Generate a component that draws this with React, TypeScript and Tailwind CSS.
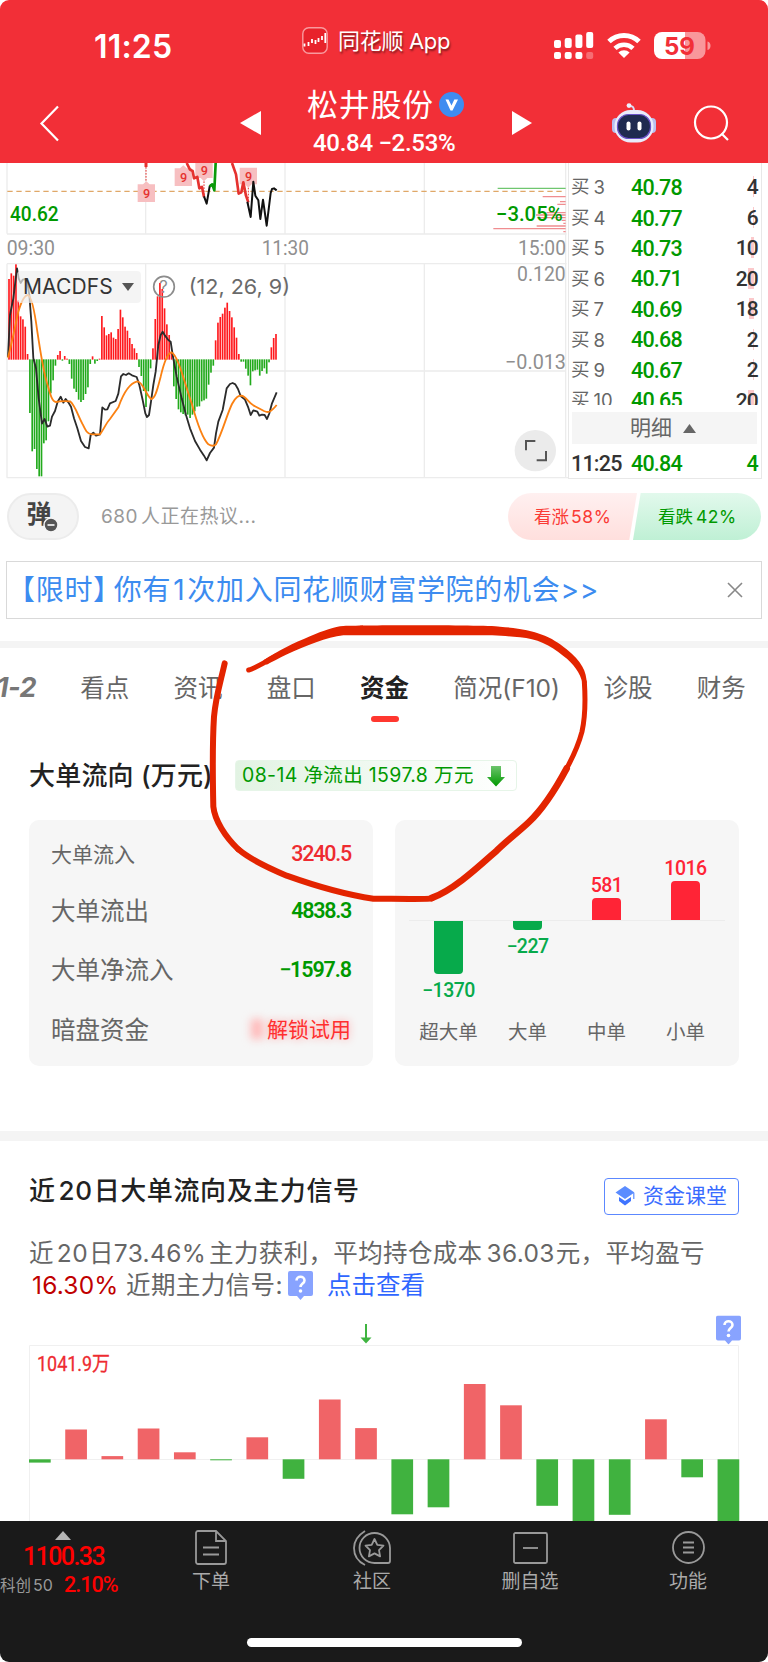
import clsx from 'clsx';

type Order = { level: string; price: string; volume: string; depth: number };
type Flow = { name: string; value: number; height: number };

// MACD histogram, one value per minute, in thirds of a pixel above the zero axis
const MACD = [
  242, 259, 252, 286, 178, 130, 121, 99, 17, -161, -276, -269, -329, -351, -351, -252, -243, -186, -102, -63,
  -19, 14, 26, -4, 11, 3, -14, -58, -88, -98, -121, -128, -122, -104, -84, -14, 10, -13, -5, 3,
  131, 97, 73, 77, 82, 66, 62, 92, 150, 127, 99, 87, 65, 47, 34, 20, -23, -50, -95, -143,
  -96, -27, 34, 122, 190, 230, 212, 154, 106, 74, 24, -81, -119, -150, -159, -164, -168, -166, -176, -166,
  -156, -142, -141, -126, -123, -118, -76, -40, -19, 58, 111, 128, 138, 156, 171, 146, 127, 97, 66, 17,
  -7, -7, -28, -49, -78, -36, -33, -31, -49, -35, -27, -43, -9, 37, 65, 77,
];

const DIF =
  '24,606 30,480 40,430 51,340 56,370 62,384 68,374 80,372 88,420 94,500 100,610 108,640 116,730 126,806 134,792 142,815 150,812 156,785 165,768 173,740 182,725 190,743 197,732 205,742 213,755 222,790 232,820 243,858 255,876 266,880 272,840 280,833 288,842 300,838 307,757 315,764 322,763 330,745 347,738 355,716 363,664 370,657 378,660 386,655 396,661 410,666 418,690 428,735 436,775 441,786 447,780 453,740 460,690 467,650 475,570 482,540 488,530 495,542 505,555 512,560 518,600 530,665 545,730 558,780 570,820 585,858 600,884 612,902 620,916 630,894 642,878 648,835 655,800 668,765 680,700 690,687 698,684 706,688 714,702 722,723 735,734 745,758 752,780 760,766 772,770 778,782 786,779 794,780 801,792 808,775 816,745 830,712';

const DEA =
  'M24 608 L40 540 L55 470 C64 440 74 420 84 420 C96 425 104 470 112 530 C120 580 128 640 140 680 C150 715 155 740 168 741 C180 738 195 738 210 739 C225 750 235 785 248 808 C256 825 262 838 275 838 L300 838 C310 825 318 805 330 792 L355 757 C368 720 385 685 412 679 C430 680 440 728 455 732 C468 728 475 690 482 665 C490 630 502 596 514 592 C535 600 555 690 575 745 C590 800 606 850 625 868 C635 874 642 874 648 868 C668 830 680 780 696 747 C708 724 716 722 725 722 C738 725 745 742 760 751 L792 768 C802 773 810 775 830 750';

const ORDERS: Order[] = [
  { level: '3', price: '40.78', volume: '4', depth: 1 },
  { level: '4', price: '40.77', volume: '6', depth: 1 },
  { level: '5', price: '40.73', volume: '10', depth: 3 },
  { level: '6', price: '40.71', volume: '20', depth: 6 },
  { level: '7', price: '40.69', volume: '18', depth: 5 },
  { level: '8', price: '40.68', volume: '2', depth: 1 },
  { level: '9', price: '40.67', volume: '2', depth: 1 },
  { level: '10', price: '40.65', volume: '20', depth: 6 },
];

const TABS = ['看点', '资讯', '盘口', '资金', '简况(F10)', '诊股', '财务'];

const FLOWS: Flow[] = [
  { name: '超大单', value: -1370, height: 53 },
  { name: '大单', value: -227, height: 8.5 },
  { name: '中单', value: 581, height: 22.5 },
  { name: '小单', value: 1016, height: 39.5 },
];

const DAYS = [-3.3, 29.8, 3.2, 30.8, 7, -1, 22, -19.5, 59.8, 31.2, -55, -48, 75.3, 54, -46.5, -63, -55.5, 40, -18, -63];

function StatusBar() {
  return (
    <div className="flex h-[85px] items-center text-white">
      <div className="ml-[94px] w-[208px] pt-[8px] font-[Inter] text-[32px] leading-none font-semibold tracking-[0.2px]">11:25</div>
      <div className="-mt-[4px] flex w-[251px] items-center">
        <svg width="26" height="27" viewBox="0 0 26 27">
          <rect x=".8" y=".8" width="24.4" height="25.4" rx="6" fill="#e8222b" stroke="#f99a9e" strokeWidth="1.4" />
          <path d="M2.500 16.500v3M6.500 15v4M10 12v4M13.500 13v4M16.500 11v4M20 9v4M23.300 6v10" stroke="#fff" strokeWidth="1.8" />
        </svg>
        <span className="ml-[10px] text-[22px] leading-[30px] tracking-[-0.3px] whitespace-nowrap [text-shadow:1px_2px_2px_#0007]">同花顺 App</span>
      </div>
      <svg className="mt-[6px] ml-px" width="158" height="28" viewBox="553 32 158 28" fill="#fff">
        <rect x="553" y="40" width="7" height="8" rx="2" />
        <rect x="563.7" y="38" width="7" height="10" rx="2" />
        <rect x="574.4" y="34.5" width="7" height="13.5" rx="2" />
        <rect x="585.2" y="32" width="7" height="16" rx="2" />
        <rect x="553" y="52" width="7" height="7" rx="2" />
        <rect x="563.7" y="52" width="7" height="7" rx="2" />
        <rect x="574.4" y="52" width="7" height="7" rx="2" />
        <rect x="585.2" y="52" width="7" height="7" rx="2" opacity=".3" />
        <path d="M608 41.5a21.5 21.5 0 0 1 30 0" fill="none" stroke="#fff" strokeWidth="5" />
        <path d="M614 48.3a13 13 0 0 1 18 0" fill="none" stroke="#fff" strokeWidth="4.6" />
        <path d="M617.4 52.6a8 8 0 0 1 11.2 0L623 58z" />
        <path d="M661 32h23v27h-23a8 8 0 0 1-8-8V40a8 8 0 0 1 8-8z" />
        <path d="M684 32h12.500a8 8 0 0 1 8 8v11a8 8 0 0 1-8 8H684z" opacity=".5" />
        <path d="M706.500 41.500c4 1 4 7.500 0 8.500z" opacity=".5" />
        <text x="663" y="54.500" fontFamily="Inter" fontWeight="700" fontSize="24" fill="#f22f37" textLength="31" lengthAdjust="spacingAndGlyphs">59</text>
      </svg>
    </div>
  );
}

function Robot() {
  return (
    <svg width="44" height="40" viewBox="0 0 44 40">
      <path d="M22 8c0-4-1-5-4-5" fill="none" stroke="#d9dcf5" strokeWidth="2" />
      <circle cx="17" cy="2.600" r="2.400" fill="#eef0ff" />
      <rect x="0" y="15" width="8" height="15" rx="4" fill="#b8bff0" />
      <rect x="36" y="15" width="8" height="15" rx="4" fill="#b8bff0" />
      <rect x="2.500" y="7" width="39" height="32.500" rx="16" fill="#e9ebfb" />
      <rect x="5.500" y="11.500" width="33" height="24" rx="11" fill="#1f2a50" stroke="#6a52c8" strokeWidth="1.200" />
      <rect x="14.500" y="18.500" width="4" height="9" rx="2" fill="#fff" />
      <rect x="25.500" y="18.500" width="4" height="9" rx="2" fill="#fff" />
    </svg>
  );
}

function TitleBar() {
  return (
    <div className="flex h-[78px] text-white">
      <svg className="mt-[20px] ml-[39px]" width="20" height="37" viewBox="0 0 20 37" fill="none" stroke="#fff" strokeWidth="2.2">
        <path d="M19 1.500 2.500 18.500 19 35.500" />
      </svg>
      <svg className="mt-[26px] ml-[181px]" width="21" height="24" fill="#fff">
        <path d="M21 0v24L0 12z" />
      </svg>
      <div className="ml-[46px] w-[204px]">
        <div className="mt-px flex h-[37px] items-center">
          <span className="w-[127px] text-[31px] leading-[37px] tracking-[0.7px]">松井股份</span>
          <svg className="ml-[5px]" width="25" height="25" viewBox="0 0 25 25">
            <circle cx="12.500" cy="12.500" r="12.500" fill="#3f8cf0" />
            <path d="M6.500 7.500h3l3 6 2.800-6h3.700L13.500 18.500h-2z" fill="#fff" />
          </svg>
        </div>
        <div className="mt-[7px] ml-[6px] font-[Roboto] text-[24px] leading-[27px] font-medium tracking-[-0.3px] whitespace-nowrap">40.84 −2.53%</div>
      </div>
      <svg className="mt-[26px] ml-px" width="21" height="24" fill="#fff">
        <path d="M0 0v24l20-12z" />
      </svg>
      <div className="mt-[18px] ml-[79px]"><Robot /></div>
      <svg className="mt-[20px] ml-[37px]" width="37" height="37" viewBox="0 0 37 37" fill="none" stroke="#fff" strokeWidth="2.2">
        <circle cx="18" cy="17.500" r="16" />
        <path d="M28.500 28.500l6.500 6.500" />
      </svg>
    </div>
  );
}

function Nine({ x, y, up }: { x: number; y: number; up?: boolean }) {
  return (
    <g>
      <path d={up ? `M${x - 26} ${y}h16l10-9 10 9h16v53h-52z` : `M${x - 26} ${y}h52v50h-16l-10 10-10-10h-16z`} fill="#f7bfc1" />
      <text x={x - 10} y={y + 40} fontFamily="Roboto" fontSize="38" fontWeight="500" fill="#e5322f">9</text>
    </g>
  );
}

function PriceChart() {
  return (
    <div className="relative w-[568px]">
      <svg width="568" height="316" viewBox="0 24 1704 948" fontFamily="Roboto">
        <g stroke="#ececec" strokeWidth="4" fill="none">
          <path d="M21 24V236M437 24V236M855 24V236M1273 24V236M21 237H1700M21 326H1700M21 326V968M437 326V968M855 326V968M1273 326V968M21 648H1697M20 968H1704M1697 24V968" />
        </g>
        <path d="M22 109H1690" stroke="#e0a868" strokeWidth="3.500" strokeDasharray="16 11" />
        <path d="M438 24v12" stroke="#e5322f" strokeWidth="9" />
        <path d="M438 36V82M612 70V128M745 80V146" stroke="#e5322f" strokeWidth="3" strokeDasharray="5 4" />
        <Nine x={439} y={88} up />
        <Nine x={550} y={40} up />
        <Nine x={612} y={19} />
        <Nine x={745} y={38} />
        <g fill="none" strokeWidth="6" strokeLinejoin="round">
          <path d="M560 24l10 20 8 4 4 22 10-4 6 34 8-4 6 30" stroke="#e5322f" strokeWidth="8" />
          <path d="M612 124l8 22 9-52 7-6" stroke="#111" />
          <path d="M629 94l8-6 6 18 4-82" stroke="#0a9a0a" strokeWidth="8" />
          <path d="M696 24l12 34 8 58 8-4 6-30 8 40 7 20" stroke="#e5322f" strokeWidth="8" />
          <path d="M742 140l10 46 8-106 6 42 9 14 6 56 8-58 11 78 12-98 4-12 6-2 8 6" stroke="#111" strokeWidth="6" />
        </g>
        <g stroke="#f08d90" strokeWidth="4">
          <path d="M1628 125h69M1680 140h17M1672 148h25M1640 173h57M1608 180h89M1612 188h85M1685 196h12M1690 205h7M1610 213h87M1480 221h217M1690 230h7" />
          <path d="M1493 100h204" stroke="#6fc66f" />
        </g>
        <text x="30" y="199" fontSize="62" fontWeight="500" fill="#009900" textLength="146" lengthAdjust="spacingAndGlyphs">40.62</text>
        <text x="1488" y="199" fontSize="62" fontWeight="500" fill="#009900" textLength="200" lengthAdjust="spacingAndGlyphs">−3.05%</text>
        <g fontSize="62" fill="#8f8f8f">
          <text x="20" y="300" textLength="145" lengthAdjust="spacingAndGlyphs">09:30</text>
          <text x="785" y="300" textLength="142" lengthAdjust="spacingAndGlyphs">11:30</text>
          <text x="1554" y="300" textLength="144" lengthAdjust="spacingAndGlyphs">15:00</text>
          <text x="1551" y="379" textLength="146" lengthAdjust="spacingAndGlyphs">0.120</text>
          <text x="1515" y="643" textLength="183" lengthAdjust="spacingAndGlyphs">−0.013</text>
        </g>
        {MACD.map((v, i) => (
          <rect
            key={i}
            x={24.5 + i * 6.965}
            y={v > 0 ? 614 - v : 613}
            width="5"
            height={Math.abs(v)}
            fill={v > 0 ? '#ff1a1e' : '#22aa1c'}
          />
        ))}
        <polyline points={DIF} fill="none" stroke="#2b2b2b" strokeWidth="5.500" strokeLinejoin="round" />
        <path d={DEA} fill="none" stroke="#fb8112" strokeWidth="5.500" />
        <circle cx="492" cy="395" r="31" fill="none" stroke="#8c8c8c" strokeWidth="5" />
        <text x="478" y="413" fontFamily="Inter" fontSize="50" fill="#8c8c8c">?</text>
        <text x="566" y="418" fontFamily="Inter" fontSize="62" fill="#6a6a6a" textLength="304" lengthAdjust="spacingAndGlyphs">(12, 26, 9)</text>
        <circle cx="1606" cy="887" r="62" fill="#ebebeb" />
        <path d="M1578 886v-28h28M1610 916h28v-28" fill="none" stroke="#555" strokeWidth="6" />
      </svg>
      <div className="absolute top-[108px] left-[17px] flex h-[32px] w-[124px] items-center rounded bg-[#f0f0f0]/70 pl-[6px]">
        <span className="w-[99px] font-[Inter] text-[21px] tracking-[0.1px] text-[#333]">MACDFS</span>
        <svg width="12" height="8" fill="#555"><path d="M0 0h12L6 8z" /></svg>
      </div>
    </div>
  );
}

function OrderBook() {
  return (
    <div className="w-[194px] border-r border-b border-l border-[#e8e8e8] pl-[2px] font-[Roboto,'Noto_Sans_CJK_SC']">
      <div className="flex h-[242px] flex-col justify-start overflow-hidden">
        <div className="h-[10px] shrink-0 overflow-hidden">
          <div className="-mt-[24px] flex text-[21px] leading-[30px] text-[#666]">
            <span className="w-[60px] text-[18.500px]">买 2</span>
            <span className="font-medium tracking-[-0.8px] text-[#090]">40.80</span>
          </div>
        </div>
        {ORDERS.map(o => (
          <div key={o.level} className="flex h-[30.45px] shrink-0 items-center">
            <span className="flex w-[60px] gap-[4px] text-[18.500px] text-[#666]">
              {'买'}
              <span className="font-[Inter]">{o.level}</span>
            </span>
            <span className="text-[21.500px] font-medium tracking-[-0.8px] text-[#090]">{o.price}</span>
            <span className="relative mr-[3px] ml-auto text-[21px] font-medium tracking-[-0.8px] text-[#333]">
              <span className="absolute top-[4px] right-[4px] h-[21px] bg-[#fbc9cb]" style={{ width: o.depth }} />
              <span className="relative">{o.volume}</span>
            </span>
          </div>
        ))}
      </div>
      <div className="mt-[7px] mr-[4px] ml-px flex h-[32px] items-center justify-center gap-[11px] bg-[#f5f5f5] pt-px pr-[3px] text-[21px] text-[#666]">
        明细
        <svg width="13" height="9" fill="#666"><path d="M0 9h13L6.500 0z" /></svg>
      </div>
      <div className="flex h-[34px] items-center pt-[6px] text-[21.500px] font-medium tracking-[-0.8px] text-[#090]">
        <span className="w-[60px] text-[#333]">11:25</span>
        <span>40.84</span>
        <span className="mr-[3px] ml-auto">4</span>
      </div>
    </div>
  );
}

function Discuss() {
  return (
    <div className="flex h-[82px] items-start pt-[14px]">
      <div className="relative ml-[7px] flex h-[47px] w-[72px] items-center justify-center rounded-full border-2 border-[#ececec] bg-[#f4f4f4] pr-[8px] pb-[3px] text-[25px] font-bold text-[#444]">
        弹
        <svg className="absolute top-[22px] left-[34px]" width="16" height="16">
          <circle cx="8" cy="8" r="7" fill="#555" stroke="#f4f4f4" strokeWidth="1.500" />
          <path d="M4.500 8h7" stroke="#fff" strokeWidth="1.600" />
        </svg>
      </div>
      <span className="mt-[9px] ml-[22px] text-[19px] leading-[30px] tracking-[0.500px] whitespace-nowrap text-[#999]">
        <span className="mr-[3px]">680</span>人正在热议...
      </span>
      <div className="mr-[7px] ml-auto flex text-[17.500px] leading-[48px] whitespace-nowrap">
        <div className="-mr-[4px] h-[47px] w-[129px] rounded-l-full bg-linear-to-b from-[#fff0f0] to-[#ffdfdd] pl-[26px] text-[#fa3a35] [clip-path:polygon(0_0,100%_0,94%_100%,0_100%)]">
          看涨<span className="ml-[2px] tracking-[0.600px]">58%</span>
        </div>
        <div className="h-[47px] w-[128px] rounded-r-full bg-linear-to-b from-[#e2f9ec] to-[#bff0d5] pl-[25px] text-[#090] [clip-path:polygon(6%_0,100%_0,100%_100%,0_100%)]">
          看跌<span className="ml-[3px] tracking-[0.500px]">42%</span>
        </div>
      </div>
    </div>
  );
}

function Banner() {
  return (
    <div className="mx-[6px] flex h-[58px] items-center justify-between border border-[#d9d9d9] pr-[18px] text-[28px] whitespace-nowrap text-[#3c8cf0]">
      <div className="flex pb-px tracking-[0.700px]">
        <span>【限时</span>
        <span className="mr-[6px] [font-feature-settings:'halt']">】</span>
        <span>你有</span>
        <span className="mx-[2px]">1</span>
        <span>次加入同花顺财富学院的机会</span>
        <span>&gt;&gt;</span>
      </div>
      <svg width="16" height="16" stroke="#888" strokeWidth="1.600"><path d="M1 1l14 14M15 1L1 15" /></svg>
    </div>
  );
}

function Tabs() {
  return (
    <div className="flex h-[79px] items-start gap-[44.250px] overflow-hidden pt-[22px] text-[24.500px] leading-[36px] whitespace-nowrap text-[#666]">
      <span className="-ml-[13px] w-[49px] text-right font-[Inter] text-[27px] font-bold tracking-[-0.500px] text-[#777] italic">1-2</span>
      {TABS.map(t => (
        <div
          key={t}
          className={clsx(
            t === '资金' && 'flex flex-col items-center font-bold text-[#222]',
            t === '简况(F10)' && 'w-[106px]',
          )}
        >
          {t}
          {t === '资金' && <span className="mt-[10px] h-[6px] w-[28px] rounded-full bg-[#ff372f]" />}
        </div>
      ))}
    </div>
  );
}

function FlowCards() {
  return (
    <div className="mt-[29px] flex gap-[22px] px-[29px]">
      <div className="h-[246px] w-[344px] rounded-[10px] bg-[#f6f6f6] px-[22px] text-[24.500px] text-[#666]">
        <div className="mt-[5px] flex h-[59px] items-center justify-between text-[21px]">
          大单流入<span className="font-[Roboto] text-[21.500px] font-medium tracking-[-1.200px] text-[#ee2b30]">3240.5</span>
        </div>
        <div className="flex h-[54px] items-center justify-between">
          大单流出<span className="font-[Roboto] text-[21.500px] font-semibold tracking-[-1.300px] text-[#090]">4838.3</span>
        </div>
        <div className="flex h-[65px] items-center justify-between">
          大单净流入<span className="font-[Roboto] text-[21.500px] font-semibold tracking-[-1.100px] text-[#090]">−1597.8</span>
        </div>
        <div className="flex h-[54px] items-center justify-between">
          暗盘资金
          <span className="relative text-[21px] text-[#ff2f2f] [text-shadow:0_0_9px_#ff9a9a]">
            <span className="absolute top-[5px] -left-[16px] h-[20px] w-[12px] bg-[#ffb8b8] blur-[4px]" />
            解锁试用
          </span>
        </div>
      </div>
      <div className="flex h-[246px] w-[344px] flex-col rounded-[10px] bg-[#f6f6f6] px-[14px]">
        <div className="flex">
          {FLOWS.map(f => {
            const out = f.value < 0;
            return (
              <div key={f.name} className="flex w-[79px] flex-col items-center font-[Roboto] text-[19.500px] leading-[24px] font-medium tracking-[-0.500px]">
                <div className="flex h-[100px] flex-col items-center justify-end">
                  {!out && <span className="text-[#ff2436]">{f.value}</span>}
                  {!out && <span className="w-[29px] rounded-t bg-[#ff2436]" style={{ height: f.height }} />}
                </div>
                <span className="h-px w-full bg-[#ececec]" />
                <div className="flex h-[90px] flex-col items-center">
                  {out && <span className="w-[29px] shrink-0 rounded-b bg-[#07aa4b]" style={{ height: f.height }} />}
                  {out && <span className="mt-[5px] text-[#07aa4b]">−{Math.abs(f.value)}</span>}
                </div>
                <span className="mt-[10px] font-[Roboto,'Noto_Sans_CJK_SC'] text-[19.500px] font-normal tracking-normal text-[#666]">{f.name}</span>
              </div>
            );
          })}
        </div>
      </div>
    </div>
  );
}

function HelpTag() {
  return (
    <svg width="25" height="29" viewBox="0 0 25 29">
      <path d="M2 0h21a2 2 0 0 1 2 2v21a2 2 0 0 1-2 2h-7l-3.500 4L9 25H2a2 2 0 0 1-2-2V2a2 2 0 0 1 2-2z" fill="#88a3ff" />
      <path d="M8.500 9.500c0-5 8-5 8 0 0 3-4 3-4 6.500" fill="none" stroke="#fff" strokeWidth="2.600" />
      <circle cx="12.500" cy="20" r="1.800" fill="#fff" />
    </svg>
  );
}

function Trend() {
  return (
    <div className="h-[380px] overflow-hidden px-[29px] pt-[32px]">
      <div className="flex justify-between">
        <h2 className="text-[26px] leading-[36px] font-medium tracking-[0.600px] whitespace-nowrap text-[#222]">
          近<span className="mr-px ml-[3px]">20</span>日大单流向及主力信号
        </h2>
        <div className="mt-[5px] flex h-[37px] w-[135px] items-center rounded border border-[#5c88ff] pb-px pl-[10px] text-[21px] whitespace-nowrap text-[#3a6cff]">
          <svg className="mr-[8px]" width="20" height="20" viewBox="0 0 20 20" fill="#5b8cff">
            <path d="M10 0l9.500 6.500L10 13 .5 6.500z" />
            <path d="M4 11l6 4 6-4v4l-6 4.500L4 15z" fill="#3f74ff" />
            <path d="M18.800 7v6" stroke="#5b8cff" strokeWidth="1.200" />
          </svg>
          资金课堂
        </div>
      </div>
      <div className="mt-[22px] text-[24.500px] leading-[32px] whitespace-nowrap text-[#666]">
        <div className="h-[32px] tracking-[0.350px]">
          近<span className="mr-px ml-[3px]">20</span>日<span className="mr-[3px]">73.46%</span>主力获利，平均持仓成本<span className="mr-px ml-[4px]">36.03</span>元，平均盈亏
        </div>
        <div className="flex h-[32px] items-center">
          <span className="ml-[3px] w-[94px] tracking-[0.200px] text-[#c00000]">16.30%</span>
          <span className="w-[162px] tracking-[0.400px]">近期主力信号:</span>
          <span className="mt-px mr-[14px]"><HelpTag /></span>
          <span className="text-[#2f66ff]">点击查看</span>
        </div>
      </div>
      <svg className="-mx-[29px] mt-[9px]" width="768" height="212" viewBox="0 1310 768 212">
        <path d="M29.500 1522V1345.500H738.500V1522M29 1459.500H738" fill="none" stroke="#f0f0f0" />
        <path d="M366 1324v16" stroke="#3fb440" strokeWidth="2" />
        <path d="M360.500 1337.500h11l-5.500 6z" fill="#3fb440" />
        <text x="37" y="1371" fontFamily="Roboto, 'Noto Sans CJK SC'" fontSize="20" fill="#ee2b30" stroke="#ee2b30" strokeWidth=".3" textLength="73" lengthAdjust="spacingAndGlyphs">1041.9万</text>
        {DAYS.map((v, i) => (
          <rect
            key={i}
            x={29 + i * 36.24}
            y={v > 0 ? 1459.3 - v : 1459.3}
            width="21.700"
            height={Math.abs(v)}
            fill={v > 0 ? '#f06467' : '#40b23f'}
          />
        ))}
        <g transform="translate(716 1315.500)"><HelpTag /></g>
      </svg>
    </div>
  );
}

function BottomBar() {
  return (
    <div className="h-[141px] rounded-b-[9px] bg-[#1a1a1a] text-[19px] text-[#aaa]">
      <div className="flex h-[80px]">
        <div className="w-[130px]">
          <svg className="mt-[10px] ml-[55px]" width="16" height="9" fill="#b5b5b5"><path d="M0 9h16L8 0z" /></svg>
          <div className="mt-[3px] ml-[23px] font-[Roboto] text-[25px] leading-[28px] font-medium tracking-[-1.600px] text-[#f00]">1100.33</div>
          <div className="-mt-px flex items-center text-[15.500px] leading-[26px] whitespace-nowrap">
            <span className="w-[64px] pt-[2px] text-[#999]">科创<span className="ml-[2px] text-[16px]">50</span></span>
            <span className="font-[Roboto] text-[21.500px] font-medium tracking-[-1px] text-[#f00]">2.10%</span>
          </div>
        </div>
        <div className="flex w-[162px] flex-col items-center pt-[9px]">
          <svg width="32" height="35" viewBox="0 0 32 35" fill="none" stroke="#999" strokeWidth="1.800">
            <path d="M1 3a2 2 0 0 1 2-2h18l10 10v21a2 2 0 0 1-2 2H3a2 2 0 0 1-2-2zM21 1v10h10M8 17.500h16M8 24.500h16" />
          </svg>
          <span className="mt-[4px] leading-[26px]">下单</span>
        </div>
        <div className="flex w-[160px] flex-col items-center pt-[9px]">
          <svg width="38" height="36" viewBox="0 0 38 36" fill="none" stroke="#999" strokeWidth="1.800">
            <path d="M12 1C4 6 1 11 1 18s3 13 11 17" />
            <path d="M21.500 3A15 15 0 0 0 21.500 33H35a2 2 0 0 0 2-2V18A15.500 15.500 0 0 0 21.500 3z" />
            <path d="M21.500 9l2.800 5.800 6.200.9-4.500 4.400 1.100 6.300-5.600-3-5.600 3 1.100-6.300-4.500-4.400 6.200-.9z" strokeLinejoin="round" />
          </svg>
          <span className="mt-[3px] leading-[26px]">社区</span>
        </div>
        <div className="flex w-[156px] flex-col items-center pt-[11px]">
          <svg width="35" height="32" viewBox="0 0 35 32" fill="none" stroke="#999" strokeWidth="1.800">
            <rect x="1" y="1" width="33" height="30" rx="1.500" />
            <path d="M10 16h15" />
          </svg>
          <span className="mt-[5px] leading-[26px]">删自选</span>
        </div>
        <div className="flex w-[160px] flex-col items-center pt-[10px]">
          <svg width="33" height="33" viewBox="0 0 33 33" fill="none" stroke="#999" strokeWidth="1.800">
            <circle cx="16.500" cy="16.500" r="15.500" />
            <path d="M11 11.500h11M11 16.500h11M11 21.500h11" />
          </svg>
          <span className="mt-[5px] leading-[26px]">功能</span>
        </div>
      </div>
      <div className="mt-[37px] ml-[247px] h-[9px] w-[275px] rounded-full bg-white" />
    </div>
  );
}

// Hand-drawn marker ring over the fund tab
function Marker() {
  return (
    <svg className="pointer-events-none absolute top-[610px] left-[200px]" width="400" height="310" viewBox="0 0 1200 930" fill="none" stroke="#e32400" strokeLinecap="round" strokeLinejoin="round">
      <path d="M146 180C165 175 190 160 228 138" strokeWidth="15" />
      <path d="M190 151C235 122 280 100 330 79C370 62 405 49 430 48C520 45 850 45 900 50C1000 58 1050 75 1100 118C1145 155 1160 185 1160 220L1147 220C1142 190 1120 160 1090 138C1050 105 1010 86 960 82C880 74 850 76 700 76L430 76C380 82 320 106 258 134C235 145 215 156 200 164z" fill="#e32400" stroke="none" />
      <path d="M1153 215C1156 260 1156 320 1146 365C1134 410 1115 448 1100 475" strokeWidth="15" />
      <path d="M1100 475C1060 550 1020 605 985 638C960 662 920 692 890 722C840 766 760 842 695 864" strokeWidth="20" />
      <path d="M695 865C680 868 640 867 520 866C420 852 330 822 260 797C200 772 150 748 115 718" strokeWidth="18" />
      <path d="M115 718C75 680 44 630 40 590C38 500 37 400 42 320C48 255 62 215 74 160" strokeWidth="18" />
    </svg>
  );
}

export default function App() {
  return (
    <div className="relative h-[1662px] w-[768px] overflow-hidden bg-white font-[Inter,'Noto_Sans_CJK_SC',sans-serif]">
      <header className="h-[163px] rounded-t-[9px] bg-[#f22f37]">
        <StatusBar />
        <TitleBar />
      </header>
      <div className="flex h-[316px]">
        <PriceChart />
        <OrderBook />
      </div>
      <Discuss />
      <Banner />
      <div className="mt-[22px] h-[7px] bg-[#f4f4f4]" />
      <Tabs />
      <div className="mt-[33px] flex h-[31px] items-center pl-[29px] whitespace-nowrap">
        <h2 className="w-[206px] text-[26px] font-medium tracking-[0.200px] text-[#222]">大单流向 (万元)</h2>
        <div className="flex h-[31px] w-[282px] items-center rounded border border-[#e6f5e8] bg-linear-to-r from-[#e2f3e3] to-white pl-[6px] text-[19.500px] text-[#090]">
          <span className="w-[245px] tracking-[0.350px]">08-14 净流出 1597.8 万元</span>
          <svg width="18" height="22" viewBox="0 0 18 22">
            <defs>
              <linearGradient id="down" x1="0" y1="0" x2="0" y2="1">
                <stop stopColor="#6cc46c" />
                <stop offset="1" stopColor="#090" />
              </linearGradient>
            </defs>
            <path d="M4 1h10v11h4l-9 9.500L0 12h4z" fill="url(#down)" />
          </svg>
        </div>
      </div>
      <FlowCards />
      <div className="mt-[65px] h-[10px] bg-[#f4f4f4]" />
      <Trend />
      <BottomBar />
      <Marker />
    </div>
  );
}
